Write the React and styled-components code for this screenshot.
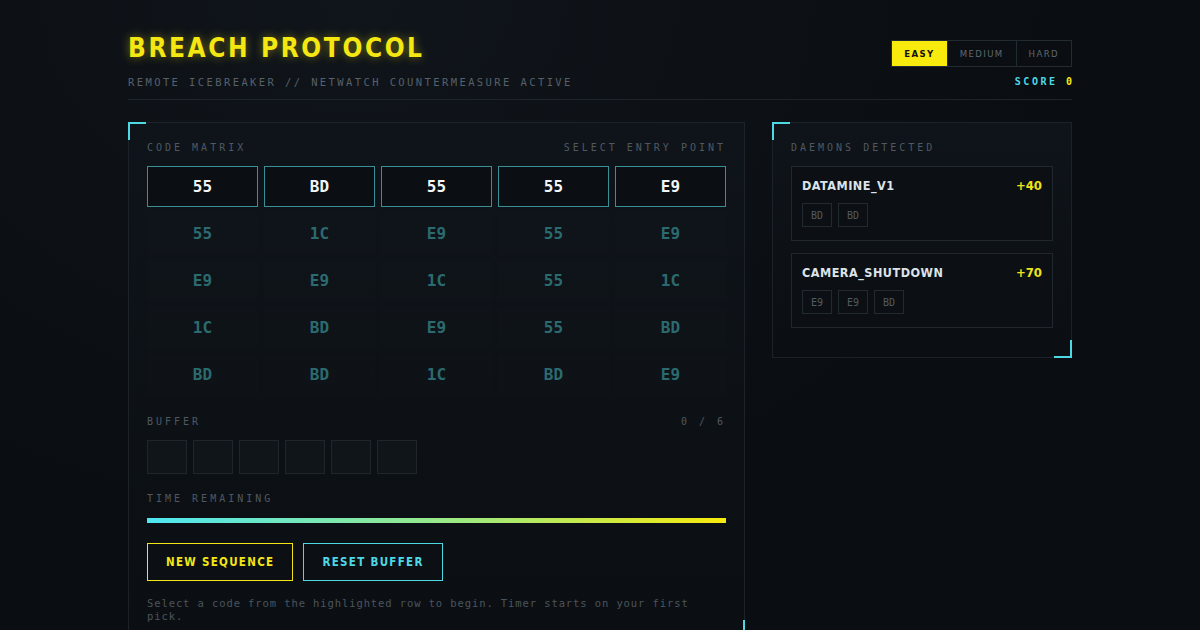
import styled, { createGlobalStyle } from "styled-components";

const GlobalStyle = createGlobalStyle`
  html, body {
    margin: 0;
    padding: 0;
    background: #0a0d11;
  }
  body {
    background: radial-gradient(ellipse at 30% 0%, #10151b 0%, #0a0d11 60%);
    min-height: 630px;
    font-family: "DejaVu Sans", sans-serif;
  }
`;

const mono = `"DejaVu Sans Mono", "Liberation Mono", monospace`;
const sans = `"DejaVu Sans Condensed", "DejaVu Sans", sans-serif`;

const matrix = [
  ["55", "BD", "55", "55", "E9"],
  ["55", "1C", "E9", "55", "E9"],
  ["E9", "E9", "1C", "55", "1C"],
  ["1C", "BD", "E9", "55", "BD"],
  ["BD", "BD", "1C", "BD", "E9"],
];

const daemons = [
  { name: "DATAMINE_V1", points: "+40", seq: ["BD", "BD"] },
  { name: "CAMERA_SHUTDOWN", points: "+70", seq: ["E9", "E9", "BD"] },
];

export default function App() {
  return (
    <Page>
      <GlobalStyle />
      <Header>
        <div>
          <Title>BREACH PROTOCOL</Title>
          <Subtitle>REMOTE ICEBREAKER // NETWATCH COUNTERMEASURE ACTIVE</Subtitle>
        </div>
        <HeaderRight>
          <Tabs>
            <Tab $active>EASY</Tab>
            <Tab>MEDIUM</Tab>
            <Tab>HARD</Tab>
          </Tabs>
          <Score>
            SCORE <span>0</span>
          </Score>
        </HeaderRight>
      </Header>

      <Columns>
        <Panel>
          <LabelRow>
            <Label>CODE MATRIX</Label>
            <Label>SELECT ENTRY POINT</Label>
          </LabelRow>
          <Grid>
            {matrix.map((row, r) =>
              row.map((code, c) => (
                <Cell key={`${r}-${c}`} $active={r === 0}>
                  {code}
                </Cell>
              ))
            )}
          </Grid>

          <LabelRow $top={20}>
            <Label>BUFFER</Label>
            <Label>0 / 6</Label>
          </LabelRow>
          <Buffer>
            {Array.from({ length: 6 }).map((_, i) => (
              <Slot key={i} />
            ))}
          </Buffer>

          <LabelRow $top={18}>
            <Label>TIME REMAINING</Label>
          </LabelRow>
          <TimerBar />

          <Buttons>
            <Button $color="#f3e614">NEW SEQUENCE</Button>
            <Button $color="#4ed8e4">RESET BUFFER</Button>
          </Buttons>
          <Help>
            Select a code from the highlighted row to begin. Timer starts on your first pick.
          </Help>
        </Panel>

        <SidePanel>
          <LabelRow>
            <Label>DAEMONS DETECTED</Label>
          </LabelRow>
          <DaemonList>
            {daemons.map((d) => (
              <Daemon key={d.name}>
                <DaemonHead>
                  <DaemonName>{d.name}</DaemonName>
                  <Points>{d.points}</Points>
                </DaemonHead>
                <Chips>
                  {d.seq.map((s, i) => (
                    <Chip key={i}>{s}</Chip>
                  ))}
                </Chips>
              </Daemon>
            ))}
          </DaemonList>
        </SidePanel>
      </Columns>
    </Page>
  );
}

const Page = styled.div`
  width: 944px;
  margin: 0 auto;
  padding-top: 32px;
`;

const Header = styled.header`
  display: flex;
  justify-content: space-between;
  align-items: flex-start;
  padding-bottom: 10px;
  border-bottom: 1px solid #1d242c;
`;

const Title = styled.h1`
  margin: 0;
  font-family: ${sans};
  font-weight: 700;
  font-size: 26px;
  line-height: 32px;
  letter-spacing: 2.6px;
  color: #f5e712;
  text-shadow: 0 0 10px rgba(245, 231, 18, 0.45);
`;

const Subtitle = styled.div`
  margin-top: 11px;
  font-family: ${mono};
  font-size: 10.5px;
  line-height: 14px;
  letter-spacing: 2.4px;
  color: #566069;
`;

const HeaderRight = styled.div`
  display: flex;
  flex-direction: column;
  align-items: flex-end;
  padding-top: 8px;
  gap: 8px;
`;

const Tabs = styled.div`
  display: flex;
  border: 1px solid #222a32;
`;

const Tab = styled.div`
  height: 25px;
  padding: 0 12px;
  display: flex;
  align-items: center;
  font-family: ${sans};
  font-size: 9.5px;
  font-weight: ${(p) => (p.$active ? 700 : 400)};
  letter-spacing: 1.4px;
  color: ${(p) => (p.$active ? "#111" : "#5f6870")};
  background: ${(p) => (p.$active ? "#f8ea0c" : "transparent")};
  & + & {
    border-left: 1px solid #222a32;
  }
`;

const Score = styled.div`
  font-family: ${mono};
  font-size: 10px;
  font-weight: 700;
  line-height: 14px;
  letter-spacing: 2.5px;
  color: #4ed8e4;
  span {
    color: #f5e712;
    letter-spacing: 0;
  }
`;

const Columns = styled.div`
  display: flex;
  gap: 27px;
  margin-top: 22px;
  align-items: flex-start;
`;

const panelBase = `
  position: relative;
  box-sizing: border-box;
  border: 1px solid #1b2229;
  background: linear-gradient(180deg, #0f141a 0%, #0b0f13 100%);
  padding: 18px;
  &::before {
    content: "";
    position: absolute;
    top: -1px;
    left: -1px;
    width: 16px;
    height: 16px;
    border-top: 2px solid #4ed8e4;
    border-left: 2px solid #4ed8e4;
  }
  &::after {
    content: "";
    position: absolute;
    bottom: -1px;
    right: -1px;
    width: 16px;
    height: 16px;
    border-bottom: 2px solid #4ed8e4;
    border-right: 2px solid #4ed8e4;
  }
`;

const Panel = styled.section`
  ${panelBase}
  width: 617px;
  padding-bottom: 14px;
`;

const SidePanel = styled.aside`
  ${panelBase}
  width: 300px;
  padding-bottom: 29px;
`;

const LabelRow = styled.div`
  display: flex;
  justify-content: space-between;
  margin-top: ${(p) => p.$top || 0}px;
  padding-top: 1px;
`;

const Label = styled.div`
  font-family: ${mono};
  font-size: 10px;
  line-height: 12px;
  letter-spacing: 3px;
  color: #4f5861;
`;

const Grid = styled.div`
  margin-top: 12px;
  display: grid;
  grid-template-columns: repeat(5, 1fr);
  grid-auto-rows: 41px;
  gap: 6px;
`;

const Cell = styled.div`
  box-sizing: border-box;
  display: flex;
  align-items: center;
  justify-content: center;
  font-family: ${mono};
  font-weight: 700;
  font-size: 16px;
  border: 1px solid ${(p) => (p.$active ? "#3a8f96" : "transparent")};
  background: ${(p) => (p.$active ? "#0b0f13" : "rgba(255,255,255,0.008)")};
  color: ${(p) => (p.$active ? "#f2f5f7" : "#2b6b70")};
`;

const Buffer = styled.div`
  display: flex;
  gap: 6px;
  margin-top: 12px;
`;

const Slot = styled.div`
  width: 40px;
  height: 34px;
  box-sizing: border-box;
  border: 1px solid #1e252c;
  background: #10151a;
`;

const TimerBar = styled.div`
  margin-top: 13px;
  height: 5px;
  background: linear-gradient(90deg, #4ee6f2 0%, #9ee97f 55%, #f8ea0c 100%);
`;

const Buttons = styled.div`
  display: flex;
  gap: 10px;
  margin-top: 20px;
`;

const Button = styled.button`
  height: 38px;
  padding: 0 18px;
  background: transparent;
  border: 1px solid ${(p) => p.$color};
  color: ${(p) => p.$color};
  font-family: ${sans};
  font-weight: 700;
  font-size: 11.5px;
  letter-spacing: 1.3px;
`;

const Help = styled.p`
  margin: 16px 0 0;
  font-family: ${mono};
  font-size: 10.5px;
  line-height: 13px;
  letter-spacing: 0.9px;
  color: #4b545c;
`;

const DaemonList = styled.div`
  display: flex;
  flex-direction: column;
  gap: 12px;
  margin-top: 12px;
`;

const Daemon = styled.div`
  border: 1px solid #20272f;
  background: #0c1014;
  padding: 11px 10px 13px;
`;

const DaemonHead = styled.div`
  display: flex;
  justify-content: space-between;
  align-items: center;
  line-height: 16px;
`;

const DaemonName = styled.div`
  font-family: ${sans};
  font-weight: 700;
  font-size: 12.5px;
  letter-spacing: 0.5px;
  color: #dce3ea;
`;

const Points = styled.div`
  font-family: ${sans};
  font-weight: 700;
  font-size: 13px;
  color: #f0e21a;
`;

const Chips = styled.div`
  display: flex;
  gap: 6px;
  margin-top: 9px;
`;

const Chip = styled.div`
  width: 30px;
  height: 24px;
  box-sizing: border-box;
  display: flex;
  align-items: center;
  justify-content: center;
  border: 1px solid #222a31;
  font-family: ${mono};
  font-size: 10px;
  color: #525b63;
`;
